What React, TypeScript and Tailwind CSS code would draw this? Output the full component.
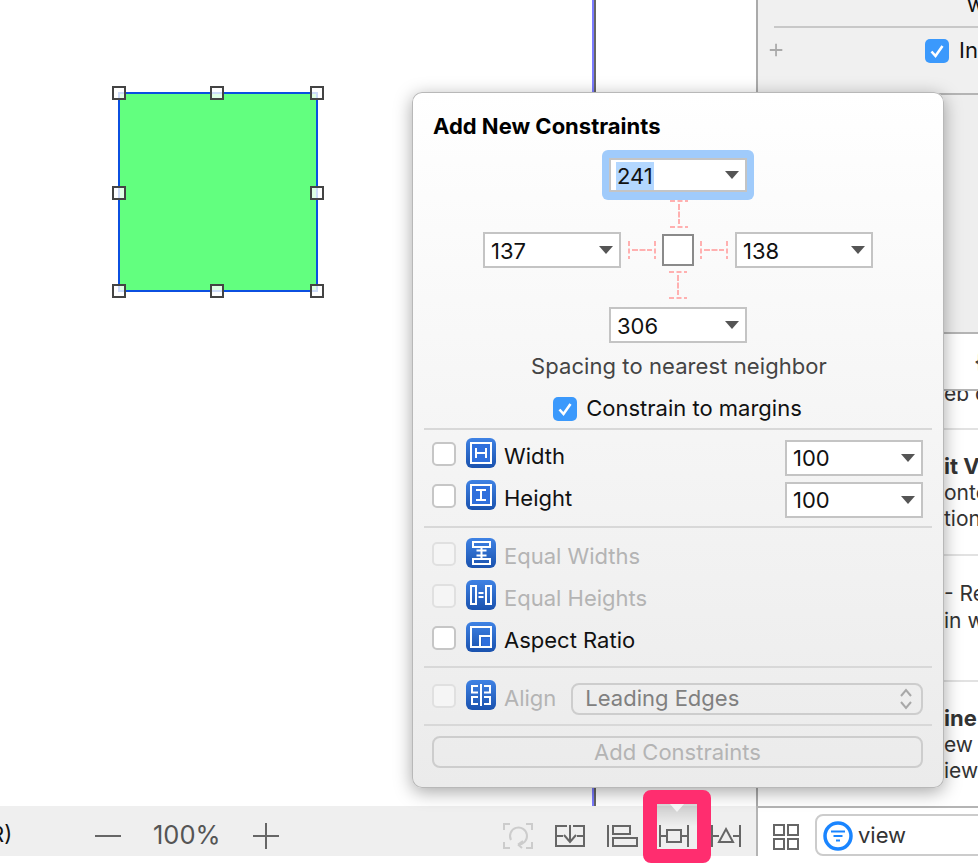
import React from "react";

function Chevron() {
  return (
    <svg width="14" height="8" viewBox="0 0 14 8" className="shrink-0">
      <path d="M0 0H14L7 8Z" fill="#555" />
    </svg>
  );
}

function Field({ value, selected, className }: { value: string; selected?: boolean; className?: string }) {
  return (
    <div className={`flex items-center justify-between w-[138px] bg-white border-2 border-[#c4c4c4] pl-[5px] pr-[6px] text-[22px] text-[#111] ${className ?? "h-[36px]"}`}>
      {selected ? (
        <span className="bg-[#b3d7ff] leading-[28px] px-[1px] mt-[2px]">{value}</span>
      ) : (
        <span className="pl-[1px] mt-[2px]">{value}</span>
      )}
      <Chevron />
    </div>
  );
}

function Check({ on, dim }: { on?: boolean; dim?: boolean }) {
  if (on) {
    return (
      <svg width="24" height="24" viewBox="0 0 24 24" className="shrink-0">
        <rect width="24" height="24" rx="5" fill="#3b99fc" />
        <path d="M6.5 12.5L10.5 17L17.5 7" fill="none" stroke="#fff" strokeWidth="2.6" />
      </svg>
    );
  }
  return (
    <div className={`w-[24px] h-[24px] shrink-0 rounded-[5px] border-2 ${dim ? "bg-[#f5f5f5] border-[#e0e0e0]" : "bg-white border-[#c6c6c6]"}`} />
  );
}

function Badge({ children }: { children: React.ReactNode }) {
  return (
    <svg width="30" height="30" viewBox="0 0 30 30" className="shrink-0 mb-[2px]">
      <defs>
        <linearGradient id="badge" x1="0" y1="0" x2="0" y2="1">
          <stop offset="0" stopColor="#3f82e4" />
          <stop offset="1" stopColor="#1a52ae" />
        </linearGradient>
      </defs>
      <rect width="30" height="30" rx="6" fill="url(#badge)" />
      {children}
    </svg>
  );
}

const W = { stroke: "#fff", strokeWidth: 2, fill: "none" };

const WidthIcon = (
  <Badge>
    <rect x="5" y="5" width="20" height="20" fill="#2f6fdc" stroke="#fff" strokeWidth="2" />
    <path d="M10 10V20M20 10V20M10 15H20" {...W} />
  </Badge>
);
const HeightIcon = (
  <Badge>
    <rect x="5" y="5" width="20" height="20" fill="#2f6fdc" stroke="#fff" strokeWidth="2" />
    <path d="M10 10H20M10 20H20M15 10V20" {...W} />
  </Badge>
);
const EqualWidthsIcon = (
  <Badge>
    <rect x="7" y="4" width="17" height="5" {...W} />
    <rect x="7" y="21" width="17" height="5" {...W} />
    <path d="M10.5 12.5H20.5M10.5 17.5H20.5M15.5 10V20" {...W} />
  </Badge>
);
const EqualHeightsIcon = (
  <Badge>
    <rect x="5" y="6" width="5" height="18" {...W} />
    <rect x="20" y="6" width="5" height="18" {...W} />
    <path d="M12.5 13H17.5M12.5 17H17.5" {...W} />
  </Badge>
);
const AspectIcon = (
  <Badge>
    <rect x="5" y="5" width="20" height="20" {...W} />
    <path d="M14 25V14H25" {...W} />
    <rect x="16" y="16" width="8" height="8" fill="#2f6fdc" />
  </Badge>
);
const AlignIcon = (
  <Badge>
    <path d="M15 4V26" {...W} />
    <path d="M12 6H6V12.5H12M12 17H6V24H12" {...W} />
    <path d="M18 6H24V12.5H18M18 17H24V24H18" {...W} />
  </Badge>
);

function Row({
  icon,
  label,
  dim,
  children,
}: {
  icon: React.ReactNode;
  label: string;
  dim?: boolean;
  children?: React.ReactNode;
}) {
  return (
    <div className="flex items-center h-[42px] pl-[20px]">
      <Check dim={dim} />
      <div className="ml-[10px] flex">{icon}</div>
      <span className={`ml-[8px] mt-[4px] text-[22px] ${dim ? "text-[#b4b4b4]" : "text-[#111]"}`}>{label}</span>
      {children}
    </div>
  );
}

function Separator() {
  return <div className="h-[2px] mx-[12px] bg-[#d8d8d8]" />;
}

function StrutH() {
  return (
    <svg width="28" height="18" viewBox="0 0 28 18" className="shrink-0">
      <path d="M1 0V18M27 0V18" stroke="#ffb0b0" strokeWidth="2" strokeDasharray="5 2.5" fill="none" />
      <path d="M4 9H24" stroke="#ffb0b0" strokeWidth="2" strokeDasharray="6 1.5" fill="none" />
    </svg>
  );
}

function StrutV() {
  return (
    <svg width="18" height="28" viewBox="0 0 18 28" className="shrink-0">
      <path d="M0 1H18M0 27H18" stroke="#ffb0b0" strokeWidth="2" strokeDasharray="5 2.5" fill="none" />
      <path d="M9 4V24" stroke="#ffb0b0" strokeWidth="2" strokeDasharray="6 1.5" fill="none" />
    </svg>
  );
}

function ToolIcon({ children }: { children: React.ReactNode }) {
  return (
    <svg width="32" height="26" viewBox="0 0 32 26" fill="none" stroke="#666" strokeWidth="2" className="shrink-0">
      {children}
    </svg>
  );
}

function Popover() {
  return (
    <div className="absolute left-[412px] top-[92px] z-10 w-[532px] h-[696px] rounded-[10px] bg-gradient-to-b from-white to-[#ebebeb] shadow-[inset_0_0_0_1px_#b8b8b8,0_4px_18px_rgba(0,0,0,0.35)]">
      <h2 className="pl-[21px] pt-[19px] h-[58px] text-[22px] leading-[30px] font-bold text-black">Add New Constraints</h2>

      {/* pin to nearest neighbor */}
      <div className="flex flex-col items-center">
        <div className="rounded-[6px] bg-[#a0cbfb] px-[7px] py-[8px]">
          <Field value="241" selected className="h-[34px]" />
        </div>
        <div className="h-[32px] flex items-start ml-[2px]">
          <StrutV />
        </div>
        <div className="flex items-center h-[36px]">
          <Field value="137" className="h-[36px] mr-[7px]" />
          <StrutH />
          <div className="w-[32px] h-[32px] mx-[6px] bg-white border-2 border-[#8a8a8a]" />
          <StrutH />
          <Field value="138" className="h-[36px] ml-[7px]" />
        </div>
        <div className="h-[39px] pt-[3px] flex items-start">
          <StrutV />
        </div>
        <Field value="306" />
        <div className="mt-[9px] h-[28px] leading-[28px] text-[22px] tracking-[0.08px] text-[#444] ml-[2px]">Spacing to nearest neighbor</div>
        <div className="mt-[17px] h-[24px] flex items-center gap-[9px] text-[22px] text-[#111] -ml-[1px]">
          <Check on />
          <span className="mb-[2px]">Constrain to margins</span>
        </div>
      </div>

      <div className="mt-[7px]">
        <Separator />
      </div>

      <div className="pt-[3px] pb-[9px]">
        <Row icon={WidthIcon} label="Width">
          <Field value="100" className="h-[36px] ml-auto mr-[21px] mt-[7px]" />
        </Row>
        <Row icon={HeightIcon} label="Height">
          <Field value="100" className="h-[36px] ml-auto mr-[21px] mt-[7px]" />
        </Row>
      </div>
      <Separator />

      <div className="pt-[5px] pb-[7px]">
        <Row icon={EqualWidthsIcon} label="Equal Widths" dim />
        <Row icon={EqualHeightsIcon} label="Equal Heights" dim />
        <Row icon={AspectIcon} label="Aspect Ratio" />
      </div>
      <Separator />

      <div className="pt-[7px] pb-[7px]">
        <Row icon={AlignIcon} label="Align" dim>
          <div className="ml-[15px] mr-[21px] mt-[5px] flex-1 h-[32px] flex items-center justify-between rounded-[8px] border-2 border-[#cdcdcd] pl-[12px] pr-[8px] text-[22px] text-[#808080]">
            <span>Leading Edges</span>
            <svg width="14" height="22" viewBox="0 0 14 22" fill="none" stroke="#a8a8a8" strokeWidth="2">
              <path d="M2 8L7 2L12 8M2 14L7 20L12 14" />
            </svg>
          </div>
        </Row>
      </div>
      <Separator />

      <div className="mt-[10px] ml-[20px] mr-[21px] h-[32px] flex items-center justify-center rounded-[8px] border-2 border-[#cdcdcd] text-[22px] text-[#b4b4b4]">
        Add Constraints
      </div>
    </div>
  );
}

function Handle({ className }: { className: string }) {
  return <div className={`absolute w-[14px] h-[14px] border-2 border-[#444] bg-white/80 ${className}`} />;
}

function PanelText({ children, bold }: { children: React.ReactNode; bold?: boolean }) {
  return (
    <div className={`h-[26.5px] leading-[26.5px] whitespace-nowrap text-[#333] ${bold ? "font-bold text-[22px]" : "text-[21px]"}`}>
      {children}
    </div>
  );
}

export default function App() {
  return (
    <div className="relative w-[978px] h-[864px] overflow-hidden bg-white font-[family-name:Inter,sans-serif]">
      <div className="flex h-[806px]">
        {/* canvas */}
        <div className="relative w-[756px] bg-white">
          <div className="absolute left-[592px] top-0 bottom-0 w-[4px] border-r-2 border-[#666] bg-[#7b7bff]" />
          <div className="absolute left-[118px] top-[92px] w-[200px] h-[200px] border-2 border-[#0b4fe0] bg-[#62ff7f]">
            <Handle className="-left-[8px] -top-[8px]" />
            <Handle className="left-[90px] -top-[8px]" />
            <Handle className="left-[190px] -top-[8px]" />
            <Handle className="-left-[8px] top-[92px]" />
            <Handle className="left-[190px] top-[92px]" />
            <Handle className="-left-[8px] top-[190px]" />
            <Handle className="left-[90px] top-[190px]" />
            <Handle className="left-[190px] top-[190px]" />
          </div>
        </div>

        {/* inspector */}
        <div className="w-[222px] border-l-2 border-[#aaa] flex flex-col overflow-hidden">
          <div className="h-[95px] bg-[#f0f0f0] border-b-2 border-[#b4b4b4]">
            <div className="h-[28px] ml-[16px] border-b-2 border-[#c8c8c8] pl-[193px] text-[22px] leading-[8px] text-[#111]">w</div>
            <div className="flex items-center h-[45px] pl-[10px]">
              <svg width="18" height="18" viewBox="0 0 18 18" className="mb-[2px]">
                <path d="M9 2V16M2 9H16" stroke="#aaa" strokeWidth="2" />
              </svg>
              <div className="ml-[141px] flex items-center gap-[10px] text-[22px] text-[#111]">
                <Check on />
                <span>In</span>
              </div>
            </div>
          </div>
          <div className="h-[239px] shrink-0 bg-[#eeeeee] border-b-2 border-[#b4b4b4]" />
          <div className="h-[57px] shrink-0 border-b-2 border-[#b4b4b4] bg-white pl-[216px] pt-[10px] text-[24px] text-[#444]">{"{"}</div>
          <div className="h-[39px] shrink-0 overflow-hidden border-b-2 border-[#e2e2e2] pl-[186px]">
            <div className="-mt-[10px]">
              <PanelText>eb c</PanelText>
            </div>
          </div>
          <div className="h-[126px] shrink-0 border-b-2 border-[#e2e2e2] pl-[186px] pt-[23px]">
            <PanelText bold>it V</PanelText>
            <PanelText>onte</PanelText>
            <PanelText>tion</PanelText>
          </div>
          <div className="h-[126px] shrink-0 border-b-2 border-[#e2e2e2] pl-[186px] pt-[25px]">
            <PanelText>- Re</PanelText>
            <PanelText>in w</PanelText>
          </div>
          <div className="flex-1 pl-[186px] pt-[23px]">
            <PanelText bold>ine</PanelText>
            <PanelText>ew c</PanelText>
            <PanelText>iew</PanelText>
          </div>
        </div>
      </div>

      <div className="flex h-[50px]">
        {/* canvas toolbar */}
        <div className="w-[756px] bg-[#efefef] flex items-center pt-[10px] pr-[14px] text-[#555]">
          <span className="-ml-[10px] mb-[3px] w-[22px] text-[22px] text-[#111]">R)</span>
          <svg width="26" height="2" viewBox="0 0 26 2" className="ml-[83px]">
            <path d="M0 1H26" stroke="#666" strokeWidth="2" />
          </svg>
          <span className="ml-[32px] mb-[1px] text-[25.5px] text-[#555]">100%</span>
          <svg width="26" height="26" viewBox="0 0 26 26" className="ml-[32px]">
            <path d="M13 0V26M0 13H26" stroke="#666" strokeWidth="2" />
          </svg>
          <div className="ml-auto flex items-center gap-[20px]">
            <ToolIcon>
              <g stroke="#ccc">
                <path d="M8 1H2V7M24 1H30V7M2 19V25H8M30 19V25H24" />
                <path d="M9 17A8.5 8.5 0 1 1 16 21.5M16 21.5L21 18M16 21.5L20 25" />
              </g>
            </ToolIcon>
            <ToolIcon>
              <path d="M2 2V24M30 2V24M2 3H13M19 3H30M2 23H30M2 13H9M23 13H30M16 2V18M10 12L16 19L22 12" />
            </ToolIcon>
            <ToolIcon>
              <path d="M2 2V24" />
              <rect x="7" y="3" width="17" height="8" />
              <rect x="7" y="15" width="24" height="8" />
            </ToolIcon>
            <ToolIcon>
              <path d="M2 2V24M30 2V24M2 13H9M23 13H30" />
              <rect x="9" y="7" width="14" height="12" />
            </ToolIcon>
            <ToolIcon>
              <path d="M2 2V24M30 2V24M2 13H9M23 13H30" />
              <path d="M16 6L23 19H9Z" />
            </ToolIcon>
          </div>
        </div>

        {/* library filter */}
        <div className="flex-1 border-l-2 border-t-2 border-[#b4b4b4] bg-white flex items-center pl-[15px]">
          <svg width="26" height="26" viewBox="0 0 26 26" fill="none" stroke="#666" strokeWidth="2" className="shrink-0 mt-[9px]">
            <rect x="1" y="1" width="10" height="10" />
            <rect x="15" y="1" width="10" height="10" />
            <rect x="1" y="15" width="10" height="10" />
            <rect x="15" y="15" width="10" height="10" />
          </svg>
          <div className="ml-[16px] flex-1 -mr-[20px] h-[42px] mt-[6px] flex items-center rounded-[8px] border-2 border-[#ccc] pl-[6px] gap-[5px] text-[22px] text-[#333]">
            <svg width="30" height="30" viewBox="0 0 30 30" className="shrink-0 mt-[2px]">
              <circle cx="15" cy="15" r="13" fill="#fff" stroke="#1a85ff" strokeWidth="3.5" />
              <path d="M8 10.5H22M10.5 15H19.5M13 19.5H17" stroke="#1a85ff" strokeWidth="2.2" />
            </svg>
            <span>view</span>
          </div>
        </div>
      </div>

      {/* callout round the pin button */}
      <div className="absolute left-[643px] top-[790px] z-20 w-[68px] h-[73px] rounded-[8px] border-[14px] border-[#ff2d6f] bg-gradient-to-b from-black/15 to-transparent to-50%">
        <svg width="14" height="8" viewBox="0 0 14 8" className="absolute left-[13px] top-0">
          <path d="M0 0H14L7 8Z" fill="#f4f4f4" />
        </svg>
      </div>

      <Popover />
    </div>
  );
}
